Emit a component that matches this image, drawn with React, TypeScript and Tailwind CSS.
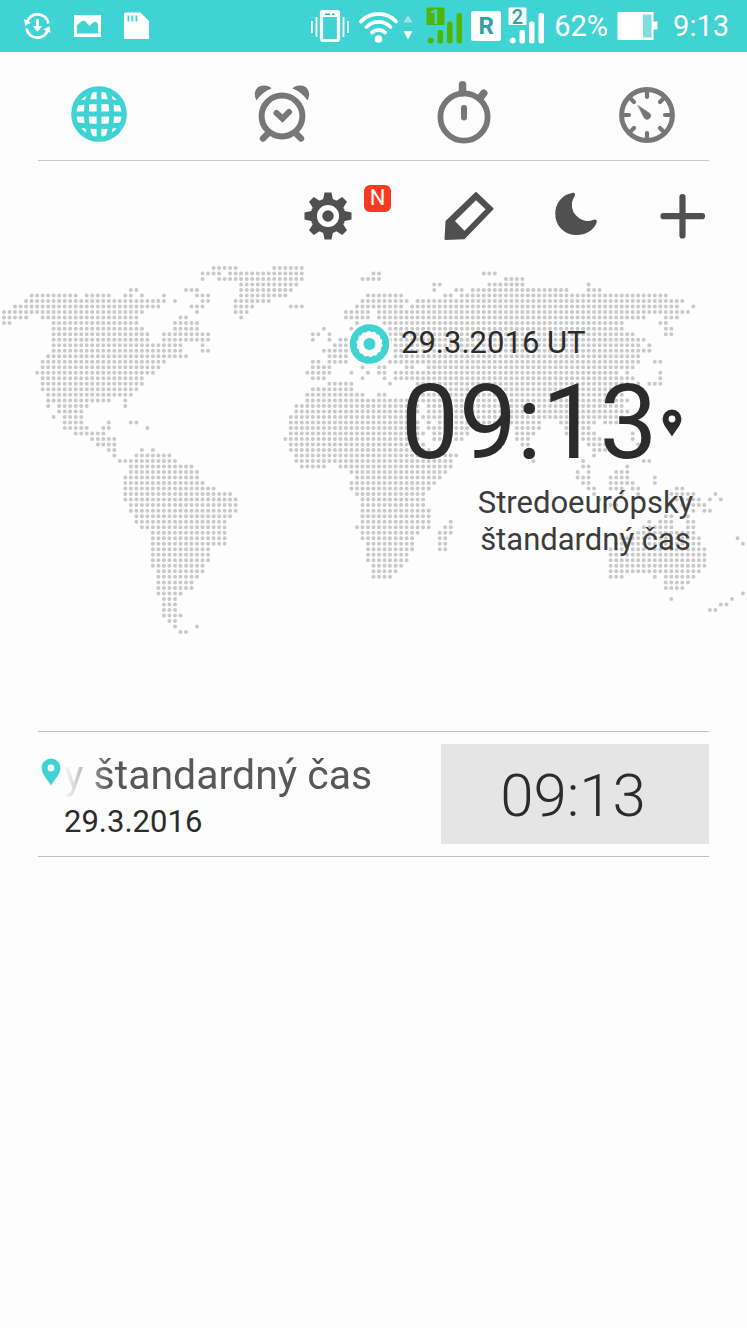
import type { ReactNode } from "react"

// Land dots of the world map: "row: from-to from-to ..." in grid columns
const LAND = `
0: 38-42 49-54
1: 36-39 41-54 67-68 87-89
2: 36 39-54 65-68 91-94
3: 43-53 78-79 88-94 106
4: 23-24 33-35 43-52 78 82-83 85-102 106-108
5: 5-13 15-19 22-23 25 29 35-37 43-51 66-72 80-81 83-120
6: 4-29 31 36-37 42-48 65-73 75-123
7: 2-28 34-36 42-45 52-54 64-72 74-122 125
8: 0-25 35 42-44 62-66 68-124
9: 0-4 7-24 32-33 43 62-66 68-116 120-122
10: 0-1 9-24 31-35 64 69-112 119-120
11: 9-25 31-35 58 63 70-112 120-121
12: 9-26 29-37 56-57 59 70-114 120-121
13: 9-26 29-37 56 59 61-62 70-116
14: 9-32 36 60-62 71-115 117
15: 9-32 36-37 58-62 71-117
16: 8-33 59-62 71-115
17: 7-29 56-57 59-62 70-115 118-119
18: 7-28 56-59 65 68-69 73-74 77-114
19: 6-27 55-59 63 66 68-69 71-111 113 119
20: 7-25 56-58 65 69 71-114 119
21: 7-25 59-63 70 75-113 115 117-119
22: 7-24 56-63 76-112
23: 8-23 55-65 68-69 76-112
24: 8-19 22 55-113
25: 8 10-15 22 53-75 77-112
26: 10-14 53-75 77-113
27: 9 11-14 52-74 76-112
28: 11-14 19 23-24 52-75 77 79-97 101-107 109-111
29: 11-15 18-19 26 52-75 77-84 93-97 102 105-106
30: 13-18 52-76 78-79 81-84 93-96 102 105-107 114
31: 16-20 51-75 78-80 82-83 93-95 105-108 114
32: 17-20 52-76 80 94-95 106-109 115
33: 19-20 25 27 52-77 107-109
34: 20 24-30 53-82 107
35: 21-31 53-81 96 105 116-117
36: 23-34 54-58 61-81 105-106 113
37: 23-35 63-80 104 106 111-113
38: 22-35 64-79 104-106 110-113 118
39: 22-36 63-78 105-106 110-114 118
40: 22-38 63-77 106-107 110-112 114-115 122-123
41: 22-41 64-76 107 112 115 121-125 129
42: 22-42 65-76 108 122-126 128 130
43: 23-42 65-76 109-111 123-127
44: 23-42 65-77 125 127-128
45: 24-41 65-77 120-121 124
46: 24-40 65-77 81 117 119-121 124-125
47: 25-40 64-77 80-81 116-121 124-125
48: 27-40 65-75 79-81 115-125
49: 27-40 65-74 79-80 112-126 133
50: 27-40 66-74 79-80 111-126 134
51: 27-37 66-74 79-80 110-127
52: 27-37 66-73 110-127
53: 27-37 66-73 110-127
54: 27-36 67-72 110-127
55: 28-36 67-71 110-126
56: 28-35 67-70 110-112 118 120-125
57: 28-34 120-124
58: 28-34 120-123
59: 28-32 134
60: 29-31 121 132
61: 29-31 130-131
62: 29-31 128-129
63: 29-32
64: 30-31
65: 31 35
66: 32-33
`

const STEP = 5.515

function landPath() {
  let d = ""
  for (const line of LAND.trim().split("\n")) {
    const [row, runs] = line.split(": ")
    for (const run of runs.split(" ")) {
      const [from, to = from] = run.split("-").map(Number)
      for (let col = from; col <= to; col++) {
        d += `M${(4 + col * STEP).toFixed(1)} ${(8 + Number(row) * STEP).toFixed(1)}h0`
      }
    }
  }
  return d
}

const DOTS = landPath()

function WorldMap() {
  return (
    <svg viewBox="0 0 747 380" className="w-full [grid-area:1/1]" fill="none" aria-hidden="true">
      <path d={DOTS} stroke="#c9c9c9" strokeWidth="4" strokeLinecap="round" />
      <circle cx="369.5" cy="84" r="22" fill="#fdfdfd" fillOpacity="0.7" />
      <circle cx="369.5" cy="84" r="16" fill="#fdfdfd" stroke="#40d3d4" strokeWidth="7.5" />
      <circle cx="369.5" cy="84" r="12" stroke="#fdfdfd" strokeWidth="2" strokeDasharray="3 2.4" />
      <circle cx="369.5" cy="84" r="6" fill="#40d3d4" />
    </svg>
  )
}

function PinIcon({ className }: { className: string }) {
  return (
    <svg viewBox="0 0 20 28" className={className} fill="currentColor" aria-hidden="true">
      <path
        fillRule="evenodd"
        d="M10 0.5a9.4 9.4 0 0 0-9.4 9.4C0.6 16 6 20.5 10 27.5 14 20.5 19.4 16 19.4 9.9A9.4 9.4 0 0 0 10 0.5zM10 6.6a3.4 3.4 0 1 1 0 6.8 3.4 3.4 0 0 1 0-6.8z"
      />
    </svg>
  )
}

function GlobeIcon() {
  return (
    <svg viewBox="0 0 56 56" className="size-14" fill="none" stroke="#40d3d4" strokeWidth="4.8" aria-hidden="true">
      <circle cx="28" cy="28" r="25.2" strokeWidth="5.2" />
      <path d="M28 3v50M3 28h50" />
      <path d="M19.500 4c-5.500 14-5.500 34 0 48M36.500 4c5.500 14 5.500 34 0 48" />
      <path d="M6 17q22-3 44 0M6 39q22 3 44 0" />
    </svg>
  )
}

function AlarmIcon() {
  return (
    <svg viewBox="0 0 56 60" className="h-[60px] w-14" fill="none" stroke="#777" aria-hidden="true">
      <circle cx="28" cy="32" r="20.4" strokeWidth="6" />
      <path d="M13.500 50l-4.500 4.500M42.500 50l4.500 4.500" strokeWidth="6.4" strokeLinecap="round" />
      <path d="M22.500 29l6 5.500L35 28" strokeWidth="6" strokeLinecap="round" />
      <path
        d="M2.500 16.500C-1.500 9 2 2 9.500 1.600c3.500-.2 6.500 1 8 3C11 7 6.500 11 2.500 16.500zM53.500 16.500C57.500 9 54 2 46.500 1.600c-3.500-.2-6.500 1-8 3C45 7 49.500 11 53.500 16.500z"
        fill="#777"
        stroke="none"
      />
    </svg>
  )
}

function StopwatchIcon() {
  return (
    <svg viewBox="0 2 56 64" className="h-16 w-14 overflow-visible" fill="none" stroke="#777" strokeLinecap="round" aria-hidden="true">
      <circle cx="28" cy="37" r="23.6" strokeWidth="5.8" />
      <path d="M26.500 4.800v8M44.500 17.500l3.200-4.300" strokeWidth="7.5" />
      <path d="M28 28v9.500" strokeWidth="6" />
    </svg>
  )
}

function TimerIcon() {
  return (
    <svg viewBox="0 -1 56 56" className="size-14 overflow-visible" fill="none" stroke="#777" strokeLinecap="round" aria-hidden="true">
      <circle cx="28" cy="28" r="25.4" strokeWidth="5" />
      <path
        d="M28 4v6M28 46v6M4 28h6M46 28h6M11 11l4 4M41 41l4 4M45 11l-4 4M15 41l-4 4"
        strokeWidth="4.2"
      />
      <path d="M19 18.500L31 26.500a3.600 3.600 0 1 1-6 4.300z" fill="#777" strokeWidth="0.5" />
    </svg>
  )
}

function GearIcon() {
  return (
    <svg viewBox="0 0 48 48" className="size-12" aria-hidden="true">
      <g fill="#505050">
        {[0, 45, 90, 135].map((angle) => (
          <path
            key={angle}
            d="M20.600.5h6.800l2 9v29l-2 9h-6.800l-2-9v-29z"
            transform={`rotate(${angle} 24 24)`}
          />
        ))}
        <circle cx="24" cy="24" r="17.500" />
      </g>
      <circle cx="24" cy="24" r="8.400" fill="#505050" stroke="#fdfdfd" strokeWidth="5.400" />
    </svg>
  )
}

function PencilIcon() {
  return (
    <svg viewBox="2 0 48 48" className="size-12 overflow-visible" aria-hidden="true">
      <path
        fill="#505050"
        stroke="#505050"
        strokeWidth="2"
        strokeLinejoin="round"
        fillRule="evenodd"
        d="M-.5 47L.5 29.500 30 1 46.500 16.800 18 46.200zM7.500 29L18.500 40.200 41 17.300 30 6.800z"
      />
    </svg>
  )
}

function MoonIcon() {
  return (
    <svg viewBox="1 0 48 48" className="size-12" aria-hidden="true">
      <path
        fill="#505050"
        stroke="#505050"
        strokeWidth="1.500"
        strokeLinejoin="round"
        d="M21 1.500C11 3 4 11.500 4 21.500c0 12.200 9 20.800 20.500 20.800 9.500 0 17-5 19.500-12.300.4-1.400-.8-2.200-2.200-1.500C29 34.500 12.500 19 21.800 4c.9-1.500.5-2.700-.8-2.500z"
      />
    </svg>
  )
}

function PlusIcon() {
  return (
    <svg viewBox="0 0 48 48" className="size-12" stroke="#505050" strokeWidth="6.200" strokeLinecap="round" aria-hidden="true">
      <path d="M24.500 5v38.500M5.500 24.200H44" />
    </svg>
  )
}

function SimIcon({ slot, color, ink }: { slot: string; color: string; ink: string }) {
  return (
    <svg viewBox="0 -4 38 46" className="h-[46px] w-[38px]" fill={color} role="img" aria-label={`SIM ${slot}`}>
      <rect x="0.5" y="0.5" width="18" height="17.5" rx="1" />
      <text x="9.5" y="16.5" fontSize="20" fontWeight="500" textAnchor="middle" fill={ink}>
        {slot}
      </text>
      <circle cx="4.7" cy="33.5" r="3" />
      <rect x="11.5" y="23" width="5.5" height="13.5" rx="2" />
      <rect x="21" y="14.5" width="5.5" height="22" rx="2" />
      <rect x="30.5" y="6" width="5.5" height="30.5" rx="2" />
    </svg>
  )
}

function StatusBar() {
  return (
    <header className="flex h-[52px] items-center justify-between bg-[#40d3d4] pr-[18px] pl-6 text-white">
      <div className="flex items-center gap-[22px]">
        <svg viewBox="0 0 28 28" className="size-7" fill="none" stroke="white" strokeWidth="2.8" aria-hidden="true">
          <path d="M3 10.500A11 11 0 0 1 24.500 11.500M24 17.500A11 11 0 0 1 2.500 16.500M13.500 7v8" />
          <path d="M0 7l1 7 6-3.500zM26.500 21l-1-7-6 3.500zM8.800 14h9.400l-4.700 6z" fill="white" stroke="none" />
        </svg>
        <svg viewBox="0 0 28 24" className="h-6 w-7" fill="white" aria-hidden="true">
          <path fillRule="evenodd" d="M0 1h27v22H0zM3 19.500h21v-8c0-3-3-5-5.500-2.500L15.500 12 11.500 7.500C9 5.500 7 8 5 9.500 3.500 10.500 3 11 3 12.500z" />
        </svg>
        <svg viewBox="0 0 26 28" className="h-7 w-[26px]" fill="white" aria-hidden="true">
          <path fillRule="evenodd" d="M1 .5h15.500L25 9v18H0V1.500zM3.500 3.500v6h1.800v-6zM7.500 3.500v6h1.800v-6zM11.500 3.500v6h1.800v-6z" />
        </svg>
      </div>
      <div className="flex items-center">
        <svg viewBox="0 0 40 34" className="h-[34px] w-10" fill="none" stroke="white" aria-hidden="true">
          <rect x="11.5" y="2.5" width="17" height="29" rx="1.5" strokeWidth="3.2" />
          <path d="M12 5.500h16" strokeWidth="5" />
          <path d="M15 5.200h5M22 5.200h2.500" stroke="#40a9aa" strokeWidth="1.6" />
          <path d="M6.500 8v20M2 12v12M33.500 8v20M38 12v12" strokeWidth="1.8" />
        </svg>
        <svg viewBox="0 0 58 36" className="ml-2 h-9 w-[58px]" fill="none" stroke="white" strokeWidth="3.8" strokeLinecap="round" aria-hidden="true">
          <path d="M3 13.500a24 24 0 0 1 35 0M8.500 19a16.800 16.800 0 0 1 24 0M14 24.500a9.500 9.500 0 0 1 13 0" />
          <circle cx="20.5" cy="31" r="3.8" fill="white" stroke="none" />
          <path d="M45.500 14.500l4.500-7.500 4.500 7.500z" fill="#a0e6e6" stroke="none" />
          <path d="M45.500 23l4.500 8.500 4.500-8.500z" fill="white" stroke="none" />
        </svg>
        <div className="ml-[10px] flex items-center gap-[7px]">
          <SimIcon slot="1" color="#50b606" ink="#40d3d4" />
          <span className="flex size-[30px] items-center justify-center rounded-xs bg-white text-[24px] leading-none font-bold text-[#30a0a3]">
            R
          </span>
          <SimIcon slot="2" color="#ffffff" ink="#30a0a3" />
        </div>
        <span className="ml-2 text-[29px] leading-9">62%</span>
        <svg viewBox="0 0 42 30" className="ml-[9px] h-[30px] w-[42px]" fill="white" aria-hidden="true">
          <path d="M.5 1h36v9.500h4v8h-4V29H.5z" />
          <path d="M26 3.500h8.500v23H26z" fill="#7fdfe0" />
        </svg>
        <time className="ml-[14px] text-[29px] leading-9">9:13</time>
      </div>
    </header>
  )
}

function IconButton({ label, children }: { label: string; children: ReactNode }) {
  return (
    <button type="button" aria-label={label} className="flex items-center justify-center">
      {children}
    </button>
  )
}

export default function App() {
  return (
    <main className="min-h-screen bg-[#fdfdfd] font-['Roboto','Noto_Sans',sans-serif] text-[#2b2b2b]">
      <StatusBar />

      <nav className="mx-[38px] flex h-[109px] items-center justify-between border-b border-[#c8c8c8] pt-4 pr-[34px] pl-[33px]">
        <IconButton label="Svetový čas">
          <GlobeIcon />
        </IconButton>
        <IconButton label="Budík">
          <AlarmIcon />
        </IconButton>
        <IconButton label="Stopky">
          <StopwatchIcon />
        </IconButton>
        <IconButton label="Časovač">
          <TimerIcon />
        </IconButton>
      </nav>

      <div className="flex h-[99px] items-center justify-end gap-[57px] pt-[10px] pr-[41px]">
        <button type="button" aria-label="Nastavenia" className="flex items-start gap-3">
          <GearIcon />
          <span className="-mt-[7px] flex size-[27px] items-center justify-center rounded-md bg-[#f93822] text-[22px] leading-none text-white">
            N
          </span>
        </button>
        <IconButton label="Upraviť">
          <PencilIcon />
        </IconButton>
        <IconButton label="Nočný režim">
          <MoonIcon />
        </IconButton>
        <IconButton label="Pridať">
          <PlusIcon />
        </IconButton>
      </div>

      <section className="grid">
        <WorldMap />
        <div className="flex flex-col items-end pt-16 pr-[51px] [grid-area:1/1]">
          <div className="w-[295px]">
            <p className="text-[31px] leading-[38px]">29.3.2016 UT</p>
            <div className="flex items-center gap-1">
              <time className="text-[103px] leading-[122px]">09:13</time>
              <PinIcon className="h-7 w-5" />
            </div>
          </div>
          <p className="w-[221px] text-center text-[31px] leading-[37px] text-[#3c3c3c]">
            Stredoeurópsky štandardný čas
          </p>
        </div>
      </section>

      <section className="mx-[38px] mt-[91px] flex items-center justify-between border-y border-[#c0c0c0] py-3">
        <div className="flex items-start pt-[6px]">
          <PinIcon className="mx-[3px] mt-2 h-7 w-5 text-[#40d3d4]" />
          <div>
            <h2 className="mask-l-from-85% text-[41px] leading-[50px] text-[#585858]">y štandardný čas</h2>
            <p className="text-[31px] leading-[44px]">29.3.2016</p>
          </div>
        </div>
        <time className="flex h-[100px] w-[268px] items-center justify-center bg-[#e5e5e5] pt-1 pr-1 text-[60px] font-light">
          09:13
        </time>
      </section>
    </main>
  )
}
